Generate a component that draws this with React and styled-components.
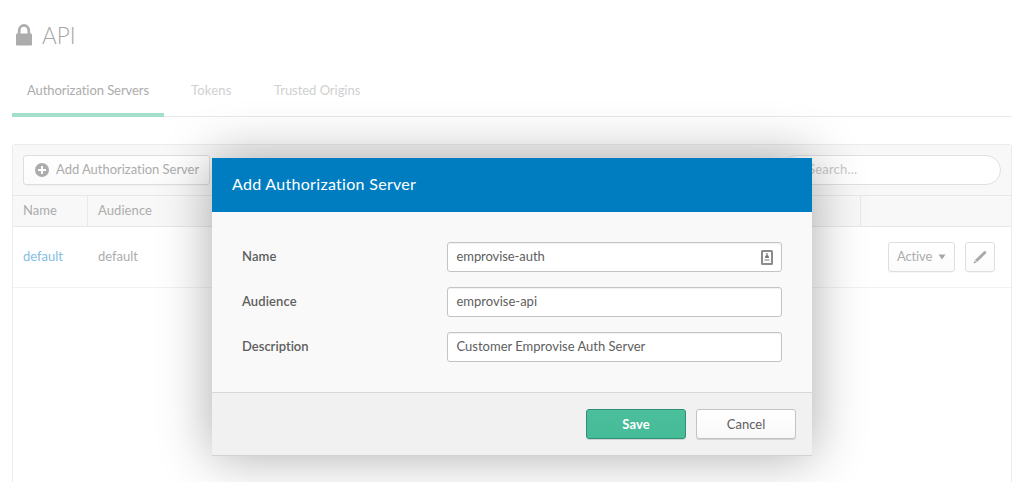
import React from 'react';
import styled, { createGlobalStyle } from 'styled-components';

const Global = createGlobalStyle`
  * { box-sizing: border-box; }
  html, body { margin: 0; height: 100%; overflow: hidden; background: #fff; }
  body, button { font-family: Lato, "Liberation Sans", sans-serif; font-size: 13px; line-height: 16px; font-variant-ligatures: none; }
  svg { flex: none; }
`;

const Page = styled.div`
  position: relative;
  height: 482px;
  padding: 21px 14px 0 12px;
  overflow: hidden;
  color: #acacac;
  display: flex;
  flex-direction: column;
`;
const Title = styled.h1`
  display: flex;
  flex: none;
  align-items: center;
  gap: 10px;
  margin: 0;
  padding-left: 4px;
  height: 29px;
  font-size: 22.5px;
  line-height: 30px;
  font-weight: 300;
  color: #a6a6a6;

  svg { margin-bottom: 2px; }
`;
const Tabs = styled.nav`
  display: flex;
  flex: none;
  gap: 12px;
  height: 53px;
  margin-top: 14px;
  border-bottom: 1px solid #e8e8e8;
`;
const Tab = styled.a`
  height: 53px;
  padding: 18px 15px 0;
  white-space: nowrap;
  letter-spacing: ${p => p.$track || 0}px;
  color: ${p => (p.$active ? '#acacac' : '#d0d0d0')};
  border-bottom: ${p => (p.$active ? '4px solid #a3dfca' : '0')};
  width: ${p => p.$w}px;
`;
const Panel = styled.section`
  flex: none;
  margin-top: 27px;
  height: 360px;
  border: 1px solid #ebebeb;
  border-radius: 3px;
`;
const Toolbar = styled.div`
  display: flex;
  justify-content: space-between;
  height: 51px;
  padding: 10px;
  background: #f8f8f8;
  border-bottom: 1px solid #e8e8e8;
`;
const LightButton = styled.button`
  display: flex;
  align-items: center;
  height: 30px;
  width: ${p => p.$w}px;
  padding: 0 ${p => p.$pad ?? 8}px;
  gap: ${p => p.$gap ?? 6}px;
  white-space: nowrap;
  color: #acacac;
  border: 1px solid #dedede;
  border-radius: 3px;
  background: linear-gradient(#fff, #fbfbfb);
  box-shadow: 0 1px 0 rgba(0, 0, 0, 0.03);
`;
const Caption = styled.span`
  padding-bottom: 2px;
  letter-spacing: ${p => p.$track || 0}px;
`;
const Search = styled.div`
  width: 220px;
  height: 30px;
  padding: 5px 0 0 26px;
  color: #c9c9c9;
  background: #fff;
  border: 1px solid #e0e0e0;
  border-radius: 15px;
  letter-spacing: 0.2px;
`;
const Row = styled.div`
  display: grid;
  grid-template-columns: 75px 773px 1fr;
  height: ${p => (p.$head ? 31 : 61)}px;
  background: ${p => (p.$head ? '#f8f8f8' : '#fff')};
  border-bottom: 1px solid ${p => (p.$head ? '#e8e8e8' : '#f1f1f1')};
`;
const Cell = styled.div`
  display: flex;
  align-items: center;
  gap: 10px;
  padding: 0 10px 2px;
  letter-spacing: ${p => p.$track || 0}px;
  color: ${p => (p.$link ? '#83bedf' : 'inherit')};
  border-right: ${p => (p.$line ? '1px solid #e8e8e8' : '0')};
`;
const Actions = styled(Cell)`
  justify-content: flex-end;
  padding: 0 16px 0 0;
`;

const Modal = styled.div`
  position: absolute;
  left: 212px;
  top: 158px;
  width: 600px;
  height: 298px;
  display: flex;
  flex-direction: column;
  background: #f9f9f9;
  color: #5e5e5e;
  border-bottom: 1px solid #d3d3d3;
  box-shadow: 0 0 50px rgba(0, 0, 0, 0.33);
`;
const ModalHead = styled.header`
  height: 54px;
  padding: 15px 20px 0;
  background: #007dc1;
  color: #fff;
  font-size: 16px;
  line-height: 21px;
  letter-spacing: 0.3px;
`;
const Form = styled.div`
  flex: 1;
  display: flex;
  flex-direction: column;
  gap: 15px;
  padding: 30px;
`;
const Field = styled.label`
  display: flex;
  align-items: center;
  justify-content: space-between;
  height: 30px;
`;
const Label = styled.span`
  padding-bottom: 2px;
  font-weight: 600;
  letter-spacing: ${p => p.$track || 0}px;
`;
const Input = styled.div`
  display: flex;
  align-items: center;
  justify-content: space-between;
  width: 335px;
  height: 30px;
  padding: 0 8px 0 8.5px;
  background: #fff;
  border: 1px solid #c4c4c4;
  border-radius: 3px;
  box-shadow: inset 0 1px 1px rgba(0, 0, 0, 0.06);
`;
const Footer = styled.footer`
  display: flex;
  justify-content: flex-end;
  gap: 10px;
  height: 63px;
  padding: 16px;
  background: #f1f1f1;
  border-top: 1px solid #d8d8d8;
`;
const Button = styled.button`
  width: 100px;
  height: 30px;
  padding: 0;
  border-radius: 3px;
  border: 1px solid ${p => (p.$primary ? '#2e8f72' : '#c3c3c3')};
  color: ${p => (p.$primary ? '#fff' : '#5e5e5e')};
  font-weight: ${p => (p.$primary ? 700 : 400)};
  background: ${p => (p.$primary ? 'linear-gradient(#4cbf9c, #46bb97)' : 'linear-gradient(#fff, #f8f8f8)')};
  box-shadow: 0 1px 0 rgba(0, 0, 0, 0.12);
  letter-spacing: ${p => p.$track || 0}px;
`;

const Lock = () => (
  <svg width="16" height="22" viewBox="0 0 16 22">
    <path d="M3.2 10V6.2a4.8 4.8 0 0 1 9.6 0V10" fill="none" stroke="#acacac" strokeWidth="2.6" />
    <rect y="9.5" width="16" height="12" rx="1" fill="#acacac" />
  </svg>
);
const Plus = () => (
  <svg width="14" height="14" viewBox="0 0 14 14">
    <circle cx="7" cy="7" r="7" fill="#acacac" />
    <path d="M7 3v8M3 7h8" stroke="#fff" strokeWidth="2" />
  </svg>
);
const Caret = () => (
  <svg width="8" height="6" viewBox="0 0 8 6"><path d="M.5.5h7L4 5.5z" fill="#a6a6a6" /></svg>
);
const Pencil = () => (
  <svg width="14" height="14" viewBox="0 0 14 14">
    <path d="M3 11 9.4 4.9" stroke="#aaa" strokeWidth="3" />
    <path d="M10 4.3 11.8 2.5" stroke="#aaa" strokeWidth="3" strokeLinecap="round" />
    <path d="M1.5 10.4 3.6 12.4.5 13.4z" fill="#aaa" />
  </svg>
);
const Card = () => (
  <svg width="12" height="15" viewBox="0 0 12 15">
    <rect x="1" y="1" width="10" height="13" rx=".5" fill="#fff" stroke="#8b8b8b" strokeWidth="2" />
    <path d="M6 3v2" stroke="#999" strokeWidth="1.6" />
    <path d="M4 8q0-3 2-3t2 3z" fill="#777" />
    <path d="M3.5 9h5v2h-5z" fill="#bbb" />
  </svg>
);

export default function App() {
  return (
    <Page>
      <Global />
      <Title><Lock /><span>API</span></Title>
      <Tabs>
        <Tab $active $w={152} $track={-0.06}>Authorization Servers</Tab>
        <Tab $w={71} $track={0.2}>Tokens</Tab>
        <Tab $w={117} $track={-0.04}>Trusted Origins</Tab>
      </Tabs>
      <Panel>
        <Toolbar>
          <LightButton $w={187} $pad={11} $gap={7}><Plus /><Caption $track={-0.03}>Add Authorization Server</Caption></LightButton>
          <Search>Search...</Search>
        </Toolbar>
        <Row $head>
          <Cell $line>Name</Cell>
          <Cell $line $track={0.08}>Audience</Cell>
          <Cell />
        </Row>
        <Row>
          <Cell $link>default</Cell>
          <Cell>default</Cell>
          <Actions>
            <LightButton $w={67}><Caption $track={-0.15}>Active</Caption><Caret /></LightButton>
            <LightButton $w={30} $pad={7}><Pencil /></LightButton>
          </Actions>
        </Row>
      </Panel>
      <Modal>
        <ModalHead>Add Authorization Server</ModalHead>
        <Form>
          <Field><Label $track={0.1}>Name</Label><Input><Caption $track={-0.08}>emprovise-auth</Caption><Card /></Input></Field>
          <Field><Label $track={0.1}>Audience</Label><Input><Caption>emprovise-api</Caption></Input></Field>
          <Field><Label>Description</Label><Input><Caption>Customer Emprovise Auth Server</Caption></Input></Field>
        </Form>
        <Footer>
          <Button $primary $track={0.1}>Save</Button>
          <Button>Cancel</Button>
        </Footer>
      </Modal>
    </Page>
  );
}
